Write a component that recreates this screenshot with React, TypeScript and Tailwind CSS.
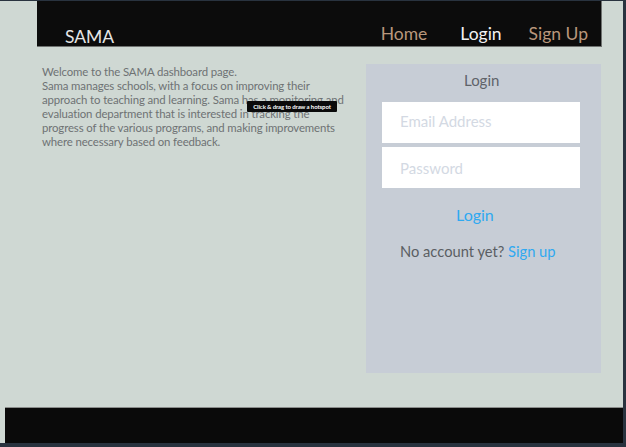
const navLinks = [
  { label: 'Home', active: false, ml: 'ml-0' },
  { label: 'Login', active: true, ml: 'ml-[33px]' },
  { label: 'Sign Up', active: false, ml: 'ml-[27px]' },
]

export default function App() {
  return (
    <div className="w-[626px] h-[447px] bg-[#29333f] pt-px pr-[3px] pb-[4px] font-['Lato','Liberation_Sans',sans-serif]">
      <div className="relative flex flex-col h-full bg-[#cfd8d3]">
        {/* Header */}
        <header className="ml-[37px] w-[565px] h-[46px] bg-[#0c0c0c] border-b border-r border-[#6f7270] flex items-end pb-[1px]">
          <span className="ml-[28px] mb-[-3px] text-[17.5px] leading-[22px] text-[#e6e6e6]">SAMA</span>
          <nav className="ml-auto mr-[13px] flex">
            {navLinks.map((link) => (
              <a
                key={link.label}
                href="#"
                className={`${link.ml} text-[17.5px] leading-[22px] ${
                  link.active ? 'text-[#f2f2f2]' : 'text-[#b9977c]'
                }`}
              >
                {link.label}
              </a>
            ))}
          </nav>
        </header>

        {/* Body */}
        <main className="flex-1 flex pt-[17px]">
          <p className="ml-[42px] mt-[1px] w-[310px] text-[11.4px] leading-[14px] tracking-[-0.12px] text-[#6e7273]">
            Welcome to the SAMA dashboard page.
            <br />
            Sama manages schools, with a focus on improving their approach to teaching and learning. Sama has a monitoring and evaluation department that is interested in tracking the progress of the various programs, and making improvements where necessary based on feedback.
          </p>

          <section className="ml-auto mr-[22px] w-[235px] h-[309px] bg-[#c7cdd6] flex flex-col items-start">
            <h2 className="ml-[98px] mt-[6px] text-[15px] leading-[20px] text-[#5f636a]">Login</h2>
            <input
              type="email"
              placeholder="Email Address"
              className="ml-[16px] mt-[12px] w-[198px] h-[41px] bg-white px-[18px] pb-[4px] text-[15px] placeholder:text-[#d3d9e3] outline-none"
            />
            <input
              type="password"
              placeholder="Password"
              className="ml-[16px] mt-[4px] w-[198px] h-[41px] bg-white px-[18px] text-[15px] placeholder:text-[#d3d9e3] outline-none"
            />
            <a href="#" className="ml-[90px] mt-[16px] text-[16px] leading-[22px] text-[#2fa9f1]">
              Login
            </a>
            <p className="ml-[34px] mt-[15px] text-[14.7px] leading-[20px] text-[#5a5e63]">
              No account yet? <a href="#" className="text-[#2fa9f1]">Sign up</a>
            </p>
          </section>
        </main>

        {/* Footer */}
        <footer className="ml-[5px] h-[36px] bg-[#0a0a0a] border-t border-[#8a8c8a]" />

        {/* Hotspot tooltip overlay */}
        <div className="absolute left-[247px] top-[100px] w-[90px] h-[11px] bg-[#0a0a0a] rounded-[1px] flex items-center justify-center">
          <span className="text-[6px] font-bold tracking-[-0.1px] text-white whitespace-nowrap leading-none">
            Click &amp; drag to draw a hotspot
          </span>
        </div>
      </div>
    </div>
  )
}
